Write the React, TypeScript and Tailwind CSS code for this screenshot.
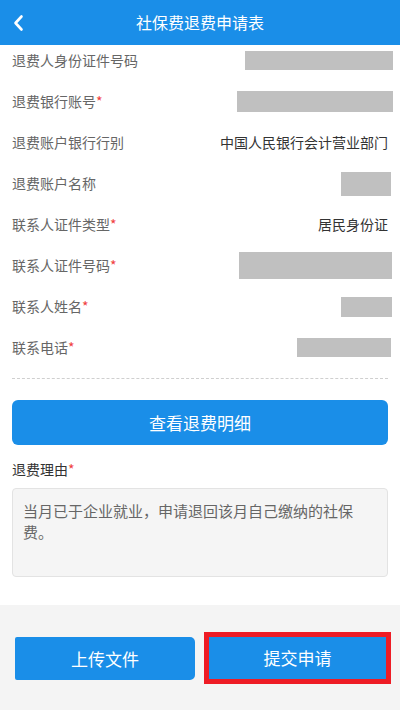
import React from "react";

type Row = {
  label: string;
  required?: boolean;
  value?: string;
  mask?: string; // tailwind classes for redaction box
};

const rows: Row[] = [
  { label: "退费人身份证件号码", mask: "w-[148px] h-[19px] -mr-[5px]" },
  { label: "退费银行账号", required: true, mask: "w-[156px] h-[21px] -mr-[5px]" },
  { label: "退费账户银行行别", value: "中国人民银行会计营业部门" },
  { label: "退费账户名称", mask: "w-[50px] h-[24px] -mr-[3px]" },
  { label: "联系人证件类型", required: true, value: "居民身份证" },
  { label: "联系人证件号码", required: true, mask: "w-[153px] h-[27px] -mr-[4px]" },
  { label: "联系人姓名", required: true, mask: "w-[51px] h-[20px] -mr-[4px]" },
  { label: "联系电话", required: true, mask: "w-[94px] h-[19px] -mr-[3px]" },
];

const App: React.FC = () => {
  return (
    <div
      className="w-[400px] h-[710px] overflow-hidden bg-white flex flex-col"
      style={{ fontFamily: '"Noto Sans CJK SC", "Noto Sans", sans-serif' }}
    >
      {/* Header */}
      <div className="relative z-10 h-[45px] shrink-0 bg-[#1a8ee8] flex items-center px-[12px]">
        <svg width="14" height="18" viewBox="0 0 14 18" className="shrink-0">
          <path d="M9.5 2.5 L3.5 9 L9.5 15.5" fill="none" stroke="#fff" strokeWidth="2.6" strokeLinecap="round" strokeLinejoin="round" />
        </svg>
        <div className="flex-1 text-center text-white text-[16px] pr-[14px] -mt-[1px]">社保费退费申请表</div>
      </div>

      {/* Content */}
      <div className="-mt-[5px] flex-1 flex flex-col px-[12px]">
        {rows.map((r, i) => (
          <div key={i} className="h-[41px] shrink-0 flex items-center justify-between">
            <span className="text-[14px] text-[#666]">
              {r.label}
              {r.required && <span className="text-[#f04040]">*</span>}
            </span>
            {r.value && <span className="text-[14px] text-[#333]">{r.value}</span>}
            {r.mask && <div className={`bg-[#c0c0c0] ${r.mask}`} />}
          </div>
        ))}
        <div className="mt-[10px] border-t border-dashed border-[#cfcfcf]" />
        <button className="mt-[21px] h-[45px] shrink-0 rounded-[6px] bg-[#1a8ee8] text-white text-[17px]">查看退费明细</button>
        <div className="mt-[14px] text-[14px] text-[#333] leading-[20px]">
          退费理由<span className="text-[#f04040]">*</span>
        </div>
        <div className="mt-[9px] h-[89px] shrink-0 rounded-[4px] border border-[#e3e3e3] bg-[#f5f5f5] pl-[10px] pr-[22px] pt-[11px] text-[15px] leading-[21px] text-[#666]">
          当月已于企业就业，申请退回该月自己缴纳的社保费。
        </div>
      </div>

      {/* Footer */}
      <div className="h-[105px] shrink-0 bg-[#f4f4f4] flex items-start pt-[27px] pl-[15px] pr-[9px] gap-[9px]">
        <button className="mt-[5px] w-[180px] h-[43px] rounded-r-[5px] rounded-l-[2px] bg-[#1a8ee8] text-white text-[17px]">上传文件</button>
        <div className="w-[187px] h-[52px] border-[5px] border-[#ee1c25] flex">
          <button className="flex-1 bg-[#1a8ee8] text-white text-[17px]">提交申请</button>
        </div>
      </div>
    </div>
  );
};

export default App;
